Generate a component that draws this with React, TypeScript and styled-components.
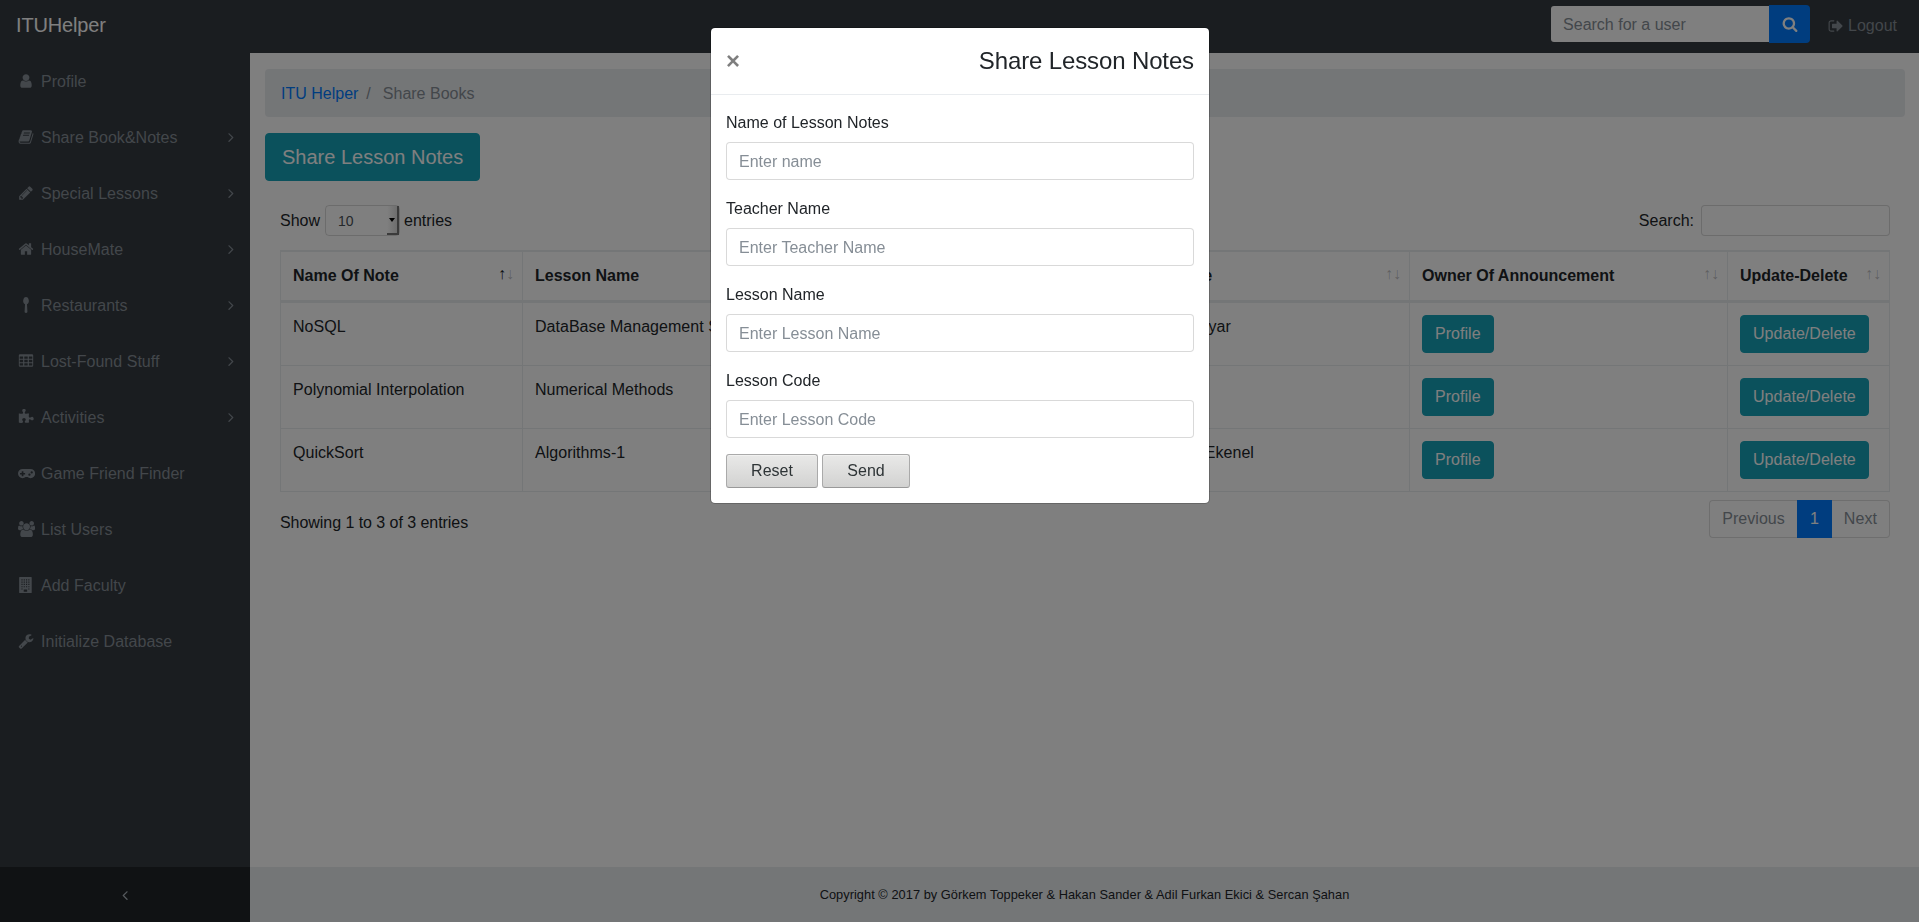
import React from 'react';
import styled, { createGlobalStyle, css } from 'styled-components';

const GlobalStyle = createGlobalStyle`
  *, *::before, *::after { box-sizing: border-box; }
  html, body, #root { height: 100%; }
  body {
    margin: 0;
    overflow: hidden;
    background: #fff;
    color: #212529;
    font: 400 16px/1.5 "Liberation Sans", Arial, sans-serif;
  }
  input, button { font-family: inherit; }
`;

/* ---------- icons ---------- */

const roundedRow = (y: number) =>
  [192, 704, 1216]
    .map(x => `M${x + 32} ${y}h320q32 0 32 32v192q0 32-32 32h-320q-32 0-32-32v-192q0-32 32-32z`)
    .join('');

const windows = [256, 512, 768, 1024, 1280]
  .map((y, row) =>
    [0, 256, 512, 768]
      .filter(x => !(row === 4 && (x === 256 || x === 512)))
      .map(x => `M${x + 384} ${y}h128v128h-128z`)
      .join('')
  )
  .join('');

const icons: Record<string, { w?: number; d: string }> = {
  user: { d: 'M1536 1399q0 109-62.5 187t-150.5 78h-854q-88 0-150.5-78t-62.5-187q0-85 8.5-160.5t31.5-152 58.5-131 94-89 134.5-34.5q131 128 313 128t313-128q76 0 134.5 34.5t94 89 58.5 131 31.5 152 8.5 160.5zm-256-887q0 159-112.5 271.5t-271.5 112.5-271.5-112.5-112.5-271.5 112.5-271.5 271.5-112.5 271.5 112.5 112.5 271.5z' },
  book: { d: 'M1703 478q40 57 18 129l-275 906q-19 64-76.5 107.5t-122.5 43.5h-923q-77 0-148.5-53.5t-99.5-131.5q-24-67-2-127 0-4 3-27t4-37q1-8-3-21.5t-3-19.5q2-11 8-21t16.5-23.5 16.5-23.5q23-38 45-91.5t30-91.5q3-10 .5-30t-.5-28q3-11 17-28t17-23q21-36 42-92t25-90q1-9-2.5-32t.5-28q4-13 22-30.5t22-22.5q19-26 42.5-84.5t27.5-96.5q1-8-3-25.5t-2-26.5q2-8 9-18t18-23 17-21q8-12 16.5-30.5t15-35 16-36 19.5-32 26.5-23.5 36-11.5 47.5 5.5l-1 3q38-9 51-9h761q74 0 114 56t18 130l-274 906q-36 119-71.5 153.5t-128.5 34.5h-869q-27 0-38 15-11 16-1 43 24 70 144 70h923q29 0 56-15.5t35-41.5l300-987q7-22 5-57 38 15 59 43zm-1064 2q-4 13 2 22.5t20 9.5h608q13 0 25.5-9.5t16.5-22.5l21-64q4-13-2-22.5t-20-9.5h-608q-13 0-25.5 9.5t-16.5 22.5zm-83 256q-4 13 2 22.5t20 9.5h608q13 0 25.5-9.5t16.5-22.5l21-64q4-13-2-22.5t-20-9.5h-608q-13 0-25.5 9.5t-16.5 22.5z' },
  pencil: { d: 'M491 1536l91-91-235-235-91 91v107h128v128h107zm523-928q0-22-22-22-10 0-17 7l-542 542q-7 7-7 17 0 22 22 22 10 0 17-7l542-542q7-7 7-17zm-54-192l416 416-832 832h-416v-416zm683 96q0 53-37 90l-166 166-416-416 166-165q36-38 90-38 53 0 91 38l235 234q37 39 37 91z' },
  home: { d: 'M1472 992v480q0 26-19 45t-45 19h-384v-384h-256v384h-384q-26 0-45-19t-19-45v-480q0-1 .5-3t.5-3l575-474 575 474q1 2 1 6zm223-69l-62 74q-8 9-21 11h-3q-13 0-21-7l-692-577-692 577q-12 8-24 7-13-2-21-11l-62-74q-8-10-7-23.5t11-21.5l719-599q32-26 76-26t76 26l244 204v-195q0-14 9-23t23-9h192q14 0 23 9t9 23v408l219 182q10 8 11 21.5t-7 23.5z' },
  spoon: { d: 'M1216 448q0 128-56 222t-154 136l50 840q2 58-40 102t-100 44h-40q-58 0-100-44t-40-102l50-840q-98-42-154-136t-56-222q0-102 36-207t106-173 178-68 178 68 106 173 36 207z' },
  table: { d: 'M224 128h1344q132 0 132 132v1144q0 132-132 132h-1344q-132 0-132-132v-1144q0-132 132-132z' + roundedRow(384) + roundedRow(768) + roundedRow(1152) },
  puzzle: { d: 'M1755 1083q0 81-44.5 135t-123.5 54q-41 0-77.5-17.5t-59-38-56.5-38-71-17.5q-110 0-110 124 0 39 16 115t15 115v5q-22 0-33 1-34 3-97.5 11.5t-115.5 13.5-98 5q-61 0-103-26.5t-42-83.5q0-37 17.5-71t38-56.5 38-59 17.5-77.5q0-79-54-123.5t-135-44.5q-84 0-143 45.5t-59 127.5q0 43 15 83t33.5 64.5 33.5 53 15 50.5q0 45-46 89-37 35-117 35-95 0-245-24-9-2-27.5-4t-27.5-4l-13-2q-1 0-3-1-2 0-2-1v-1024q2 1 17.5 3.5t34 5 21.5 3.5q150 24 245 24 80 0 117-35 46-44 46-89 0-22-15-50.5t-33.5-53-33.5-64.5-15-83q0-82 59-127.5t144-45.5q80 0 134 44.5t54 123.5q0 41-17.5 77.5t-38 59-38 56.5-17.5 71q0 57 42 83.5t103 26.5q64 0 180-15t163-17v2q-1 2-3.5 17.5t-5 34-3.5 21.5q-24 150-24 245 0 80 35 117 44 46 89 46 22 0 50.5-15t53-33.5 64.5-33.5 83-15q82 0 127.5 59t45.5 143z' },
  gamepad: { w: 1920, d: 'M512 448h896a512 512 0 0 1 0 1024q-196 0-344-128h-208q-148 128-344 128a512 512 0 0 1 0-1024zM448 704q-32 0-32 32v160h-160q-32 0-32 32v96q0 32 32 32h160v160q0 32 32 32h128q32 0 32-32v-160h160q32 0 32-32v-96q0-32-32-32h-160v-160q0-32-32-32zM1280 960a128 128 0 1 0 0 256a128 128 0 1 0 0-256zM1536 704a128 128 0 1 0 0 256a128 128 0 1 0 0-256z' },
  users: { w: 1920, d: 'M593 896q-162 5-265 128h-134q-82 0-138-40.5t-56-118.5q0-353 124-353 6 0 43.5 21t97.5 42.5 119 21.5q67 0 133-23-5 37-5 66 0 139 81 256zm1071 637q0 120-73 189.5t-194 69.5h-874q-121 0-194-69.5t-73-189.5q0-53 3.5-103.5t14-109 26.5-108.5 43-97.5 62-81 85.5-53.5 111.5-20q10 0 43 21.5t73 48 107 48 135 21.5 135-21.5 107-48 73-48 43-21.5q61 0 111.5 20t85.5 53.5 62 81 43 97.5 26.5 108.5 14 109 3.5 103.5zm-1024-1277q0 106-75 181t-181 75-181-75-75-181 75-181 181-75 181 75 75 181zm704 384q0 159-112.5 271.5t-271.5 112.5-271.5-112.5-112.5-271.5 112.5-271.5 271.5-112.5 271.5 112.5 112.5 271.5zm576 225q0 78-56 118.5t-138 40.5h-134q-103-123-265-128 81-117 81-256 0-29-5-66 66 23 133 23 59 0 119-21.5t97.5-42.5 43.5-21q124 0 124 353zm-128-609q0 106-75 181t-181 75-181-75-75-181 75-181 181-75 181 75 75 181z' },
  building: { w: 1920, d: 'M192 0h1280q64 0 64 64v1664q0 64-64 64h-1280q-64 0-64-64v-1664q0-64 64-64zM640 1408v256h384v-256z' + windows },
  wrench: { d: 'M448 1472q0-26-19-45t-45-19-45 19-19 45 19 45 45 19 45-19 19-45zm644-420l-682 682q-37 37-90 37-52 0-91-37l-106-108q-38-36-38-90 0-53 38-91l681-681q39 98 114.5 173.5t173.5 114.5zm634-435q0 39-23 106-47 134-164.5 217.5t-258.5 83.5q-185 0-316.5-131.5t-131.5-316.5 131.5-316.5 316.5-131.5q58 0 121.5 16.5t107.5 46.5q16 11 16 28t-16 28l-293 169v224l193 107q5-3 79-48.5t135.5-81 70.5-35.5q15 0 23.5 10t8.5 25z' },
  search: { d: 'M1216 832q0-185-131.5-316.5t-316.5-131.5-316.5 131.5-131.5 316.5 131.5 316.5 316.5 131.5 316.5-131.5 131.5-316.5zm512 832q0 52-38 90t-90 38q-54 0-90-38l-343-342q-179 124-399 124-143 0-273.5-55.5t-225-150-150-225-55.5-273.5 55.5-273.5 150-225 225-150 273.5-55.5 273.5 55.5 225 150 150 225 55.5 273.5q0 220-124 399l343 343q37 37 37 90z' },
  signOut: { d: 'M704 1440q0 4 1 20t.5 26.5-3 23.5-10 19.5-20.5 6.5h-320q-119 0-203.5-84.5t-84.5-203.5v-704q0-119 84.5-203.5t203.5-84.5h320q13 0 22.5 9.5t9.5 22.5q0 4 1 20t.5 26.5-3 23.5-10 19.5-20.5 6.5h-320q-66 0-113 47t-47 113v704q0 66 47 113t113 47h312l11.5 1 11.5 3 8 5.5 7 9 2 13.5zm928-544q0 26-19 45l-544 544q-19 19-45 19t-45-19-19-45v-288h-448q-26 0-45-19t-19-45v-384q0-26 19-45t45-19h448v-288q0-26 19-45t45-19 45 19l544 544q19 19 19 45z' },
  angleRight: { d: 'M1171 960q0 13-10 23l-466 466q-10 10-23 10t-23-10l-50-50q-10-10-10-23t10-23l393-393-393-393q-10-10-10-23t10-23l50-50q10-10 23-10t23 10l466 466q10 10 10 23z' },
  angleLeft: { d: 'M1203 544q0 13-10 23l-393 393 393 393q10 10 10 23t-10 23l-50 50q-10 10-23 10t-23-10l-466-466q-10-10-10-23t10-23l466-466q10-10 23-10t23 10l50 50q10 10 10 23z' },
};

const Glyph = styled.svg`
  flex: none;
  display: block;
  height: 16px;
  fill: currentColor;
`;

const Icon = ({ name }: { name: string }) => {
  const { w = 1792, d } = icons[name];
  return (
    <Glyph viewBox={`0 0 ${w} 1792`} width={(w / 1792) * 16} height={16} aria-hidden>
      <path fillRule="evenodd" d={d} />
    </Glyph>
  );
};

/* ---------- page frame ---------- */

const Page = styled.div`
  display: grid;
  grid-template: 53px 1fr 55px / 250px 1fr;
  height: 100vh;
`;

const Navbar = styled.header`
  grid-column: 1 / -1;
  display: flex;
  align-items: center;
  justify-content: space-between;
  padding: 0 16px;
  background: #343a40;
`;

const Brand = styled.a`
  color: #fff;
  font-size: 20px;
  line-height: 30px;
  letter-spacing: -0.15px;
  margin-top: -4px;
`;

const NavActions = styled.div`
  display: flex;
  align-items: center;
  margin-top: -5px;
`;

const UserSearch = styled.input`
  width: 218px;
  height: 36px;
  border: 0;
  border-radius: 3px 0 0 3px;
  padding: 1px 12px 0;
  background: #fff;
  font-size: 16px;
  &::placeholder { color: #868e96; opacity: 1; }
`;

const SearchButton = styled.button`
  display: flex;
  align-items: center;
  justify-content: center;
  width: 41px;
  height: 38px;
  border: 0;
  border-radius: 0 4px 4px 0;
  background: #007bff;
  color: #fff;
`;

const Logout = styled.a`
  display: flex;
  align-items: center;
  gap: 4px;
  margin: 3px 6px 0 18px;
  color: #868e96;
`;

const Sidebar = styled.nav`
  background: #343a40;
`;

const SideLink = styled.a`
  display: flex;
  align-items: center;
  height: 56px;
  padding: 0 11px 0 16px;
  color: #868e96;
`;

const IconSlot = styled.span`
  display: flex;
  justify-content: center;
  width: 20.6px;
  margin-right: 4.4px;
`;

const SideLabel = styled.span`
  flex: 1;
  padding-top: 1px;
  letter-spacing: 0.03px;
`;

const SidebarToggle = styled.button`
  display: flex;
  align-items: center;
  justify-content: center;
  border: 0;
  background: #212529;
  color: #adb5bd;
`;

const Footer = styled.footer`
  display: flex;
  align-items: center;
  justify-content: center;
  background: #e9ecef;
  font-size: 12.8px;
  letter-spacing: 0.04px;
`;

/* ---------- main content ---------- */

const Main = styled.main`
  padding: 16px 14px 0 15px;
`;

const Breadcrumb = styled.div`
  display: flex;
  height: 48px;
  padding: 13px 16px 11px;
  border-radius: 4px;
  background: #e9ecef;
  color: #868e96;
`;

const BreadcrumbLink = styled.a`
  color: #007bff;
`;

const Separator = styled.span`
  padding: 0 12px 0 8px;
`;

const InfoButton = styled.button<{ $large?: boolean }>`
  display: inline-block;
  border: 1px solid #17a2b8;
  border-radius: 4px;
  background: #17a2b8;
  color: #fff;
  padding: 6px 12px;
  font-size: 16px;
  line-height: 24px;
  letter-spacing: 0.04px;
  ${p => p.$large && css`
    display: block;
    margin-top: 16px;
    padding: 8px 16px;
    font-size: 20px;
    line-height: 30px;
    letter-spacing: 0;
  `}
`;

const TableArea = styled.section`
  padding: 24px 15px 0;
`;

const Controls = styled.div`
  display: flex;
  justify-content: space-between;
  align-items: center;
  height: 31px;
  margin-bottom: 14px;
`;

const ControlLabel = styled.label`
  display: flex;
  align-items: center;
`;

const LengthSelect = styled.span`
  display: flex;
  justify-content: space-between;
  width: 75px;
  height: 31px;
  margin: 0 4px 0 5px;
  border: 1px solid rgba(0, 0, 0, 0.15);
  border-radius: 4px;
  padding-left: 12px;
  color: #495057;
  font-size: 14px;
  line-height: 31px;
`;

const SelectArrow = styled.span`
  display: flex;
  align-items: center;
  justify-content: center;
  width: 12px;
  height: 29px;
  border-right: 2px solid #777;
  border-bottom: 2px solid #777;
  background: linear-gradient(90deg, #fff, #dcdcdc);
  &::before {
    content: '';
    border: 3px solid transparent;
    border-top: 4px solid #000;
    border-bottom: 0;
  }
`;

const TableSearch = styled.input`
  width: 189px;
  height: 31px;
  margin-left: 7px;
  border: 1px solid rgba(0, 0, 0, 0.15);
  border-radius: 4px;
  background: #fff;
`;

const Table = styled.table`
  width: 1610px;
  table-layout: fixed;
  border-collapse: separate;
  border-spacing: 0;
  border: 1px solid #e9ecef;
`;

const cell = css`
  padding: 12px;
  border: 1px solid #e9ecef;
  border-left: 0;
  text-align: left;
  vertical-align: top;
  &:last-child { border-right: 0; }
`;

const Th = styled.th<{ $w: number }>`
  ${cell}
  position: relative;
  width: ${p => p.$w}px;
  border-bottom-width: 2px;
  white-space: nowrap;
`;

const Td = styled.td`
  ${cell}
  height: 63px;
  border-bottom: 0;
  white-space: nowrap;
  letter-spacing: 0.03px;
`;

const SortArrows = styled.span<{ $active?: boolean }>`
  position: absolute;
  right: 8px;
  bottom: 14.4px;
  display: flex;
  color: rgba(33, 37, 41, 0.3);
  &::before { content: '↑'; ${p => p.$active && 'color: #212529;'} }
  &::after { content: '↓'; }
`;

const TableFooter = styled.div`
  display: flex;
  justify-content: space-between;
  align-items: flex-start;
  padding-top: 8px;
`;

const Info = styled.span`
  padding-top: 11px;
  letter-spacing: -0.05px;
`;

const Pagination = styled.div`
  display: flex;
  line-height: 20px;
  letter-spacing: 0.06px;
  color: #868e96;
`;

const PageLink = styled.a<{ $active?: boolean }>`
  padding: 8px 12px;
  border: 1px solid #ddd;
  &:first-child { border-right: 0; border-radius: 4px 0 0 4px; }
  &:last-child { border-left: 0; border-radius: 0 4px 4px 0; }
  ${p => p.$active && css`
    border-color: #007bff;
    background: #007bff;
    color: #fff;
  `}
`;

/* ---------- modal ---------- */

const Backdrop = styled.div`
  position: fixed;
  inset: 0;
  background: rgba(0, 0, 0, 0.5);
  display: flex;
  justify-content: center;
  align-items: flex-start;
  padding: 27px 0 0 1px;
`;

const Modal = styled.div`
  width: 500px;
  border: 1px solid rgba(0, 0, 0, 0.2);
  border-radius: 5px;
  background: #fff;
  background-clip: padding-box;
`;

const ModalHeader = styled.div`
  display: flex;
  align-items: center;
  justify-content: space-between;
  padding: 15px;
  border-bottom: 1px solid #e9ecef;
`;

const Close = styled.button`
  border: 0;
  padding: 0;
  background: none;
  color: #000;
  opacity: 0.5;
  font-size: 24px;
  font-weight: 700;
  line-height: 24px;
`;

const ModalTitle = styled.h4`
  margin: 0;
  font-size: 24px;
  font-weight: 400;
  line-height: 36px;
  letter-spacing: -0.13px;
`;

const ModalBody = styled.form`
  padding: 15px;
`;

const Field = styled.label`
  display: flex;
  flex-direction: column;
  gap: 7px;
  padding-top: 1px;
  margin-bottom: 16px;
`;

const TextInput = styled.input`
  height: 38px;
  padding: 1px 12px 0;
  border: 1px solid rgba(0, 0, 0, 0.15);
  border-radius: 4px;
  background: #fff;
  background-clip: padding-box;
  font-size: 16px;
  &::placeholder { color: #868e96; opacity: 1; }
`;

const FormButtons = styled.div`
  display: flex;
  gap: 4px;
`;

const FormButton = styled.button<{ $w: number }>`
  width: ${p => p.$w}px;
  height: 34px;
  padding: 0;
  border: 1px solid #aaa;
  border-bottom-color: #999;
  border-radius: 3px;
  background: linear-gradient(#e9e9e8, #d2d2d1);
  box-shadow: inset 0 1px 0 #f1f1f0;
  color: #2e3436;
  font-size: 16px;
`;

/* ---------- data ---------- */

const sideItems = [
  { icon: 'user', label: 'Profile' },
  { icon: 'book', label: 'Share Book&Notes', sub: true },
  { icon: 'pencil', label: 'Special Lessons', sub: true },
  { icon: 'home', label: 'HouseMate', sub: true },
  { icon: 'spoon', label: 'Restaurants', sub: true },
  { icon: 'table', label: 'Lost-Found Stuff', sub: true },
  { icon: 'puzzle', label: 'Activities', sub: true },
  { icon: 'gamepad', label: 'Game Friend Finder' },
  { icon: 'users', label: 'List Users' },
  { icon: 'building', label: 'Add Faculty' },
  { icon: 'wrench', label: 'Initialize Database' },
];

const columns = [
  { label: 'Name Of Note', w: 242 },
  { label: 'Lesson Name', w: 330 },
  { label: 'Lesson Code', w: 239 },
  { label: 'Teacher Name', w: 318 },
  { label: 'Owner Of Announcement', w: 318 },
  { label: 'Update-Delete', w: 161 },
];

const notes = [
  ['NoSQL', 'DataBase Management Systems', 'BLG361', 'Sima Etaner Uyar'],
  ['Polynomial Interpolation', 'Numerical Methods', 'BLG202', ''],
  ['QuickSort', 'Algorithms-1', 'BLG335', 'Hazım Kemal Ekenel'],
];

const fields = [
  ['Name of Lesson Notes', 'Enter name'],
  ['Teacher Name', 'Enter Teacher Name'],
  ['Lesson Name', 'Enter Lesson Name'],
  ['Lesson Code', 'Enter Lesson Code'],
];

export default function App() {
  return (
    <>
      <GlobalStyle />
      <Page>
        <Navbar>
          <Brand>ITUHelper</Brand>
          <NavActions>
            <UserSearch placeholder="Search for a user" />
            <SearchButton aria-label="Search"><Icon name="search" /></SearchButton>
            <Logout><Icon name="signOut" />Logout</Logout>
          </NavActions>
        </Navbar>

        <Sidebar>
          {sideItems.map(item => (
            <SideLink key={item.label}>
              <IconSlot><Icon name={item.icon} /></IconSlot>
              <SideLabel>{item.label}</SideLabel>
              {item.sub && <Icon name="angleRight" />}
            </SideLink>
          ))}
        </Sidebar>

        <Main>
          <Breadcrumb>
            <BreadcrumbLink>ITU Helper</BreadcrumbLink>
            <Separator>/</Separator>
            <span>Share Books</span>
          </Breadcrumb>
          <InfoButton $large>Share Lesson Notes</InfoButton>

          <TableArea>
            <Controls>
              <ControlLabel>
                Show <LengthSelect>10<SelectArrow /></LengthSelect> entries
              </ControlLabel>
              <ControlLabel>Search:<TableSearch /></ControlLabel>
            </Controls>
            <Table>
              <thead>
                <tr>
                  {columns.map((c, i) => (
                    <Th key={c.label} $w={c.w}>
                      {c.label}
                      <SortArrows $active={i === 0} />
                    </Th>
                  ))}
                </tr>
              </thead>
              <tbody>
                {notes.map(row => (
                  <tr key={row[0]}>
                    {row.map((text, i) => <Td key={i}>{text}</Td>)}
                    <Td><InfoButton>Profile</InfoButton></Td>
                    <Td><InfoButton>Update/Delete</InfoButton></Td>
                  </tr>
                ))}
              </tbody>
            </Table>
            <TableFooter>
              <Info>Showing 1 to 3 of 3 entries</Info>
              <Pagination>
                <PageLink>Previous</PageLink>
                <PageLink $active>1</PageLink>
                <PageLink>Next</PageLink>
              </Pagination>
            </TableFooter>
          </TableArea>
        </Main>

        <SidebarToggle aria-label="Collapse"><Icon name="angleLeft" /></SidebarToggle>
        <Footer>Copyright © 2017 by Görkem Toppeker &amp; Hakan Sander &amp; Adil Furkan Ekici &amp; Sercan Şahan</Footer>
      </Page>

      <Backdrop>
        <Modal role="dialog">
          <ModalHeader>
            <Close aria-label="Close">×</Close>
            <ModalTitle>Share Lesson Notes</ModalTitle>
          </ModalHeader>
          <ModalBody>
            {fields.map(([label, placeholder]) => (
              <Field key={label}>
                {label}
                <TextInput placeholder={placeholder} />
              </Field>
            ))}
            <FormButtons>
              <FormButton type="reset" $w={92}>Reset</FormButton>
              <FormButton type="button" $w={88}>Send</FormButton>
            </FormButtons>
          </ModalBody>
        </Modal>
      </Backdrop>
    </>
  );
}
